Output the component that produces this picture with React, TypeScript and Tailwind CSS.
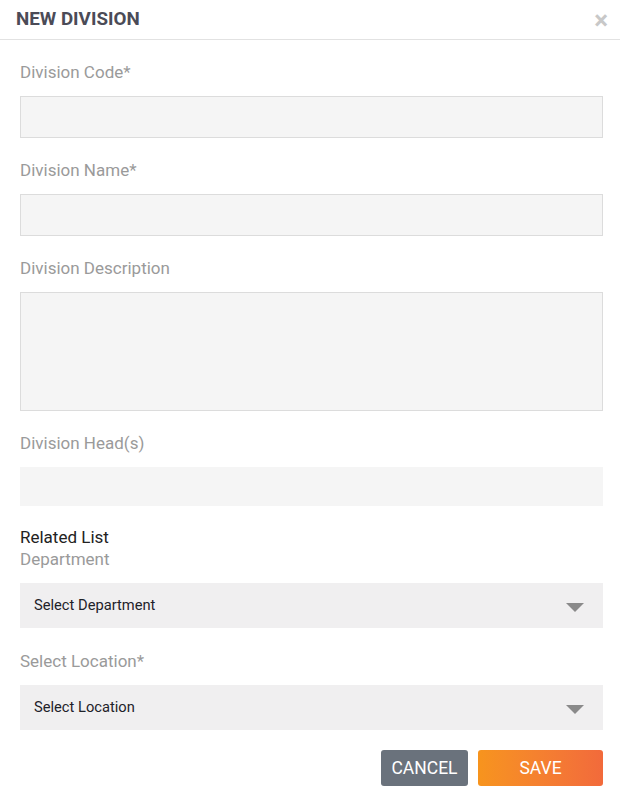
import React from 'react';

function Label({ children, className = '' }: { children: React.ReactNode; className?: string }) {
  return <div className={`text-[17px] leading-6 text-[#9a9a9a] ${className}`}>{children}</div>;
}

function SelectBox({ placeholder }: { placeholder: string }) {
  return (
    <div className="flex h-[45px] items-center justify-between bg-[#f0eff0] pl-[14px] pr-[19px]">
      <span className="text-[14.7px] text-[#1e2229]">{placeholder}</span>
      <svg width="18" height="9" viewBox="0 0 18 9" className="mt-[3px]">
        <path d="M0 0 L18 0 L9 9 Z" fill="#8a8a8a" />
      </svg>
    </div>
  );
}

export default function App() {
  return (
    <div className="h-[802px] w-[620px] bg-white font-['Roboto',sans-serif]">
      {/* Header */}
      <div className="flex h-10 items-center justify-between border-b border-[#e2e2e2] pl-4 pr-[12px]">
        <h1 className="text-[18.8px] font-bold text-[#4b4b57]">NEW DIVISION</h1>
        <span className="text-[26px] font-bold leading-none text-[#c8c8c8]">×</span>
      </div>

      {/* Body */}
      <div className="pl-5 pr-[17px] pt-5">
        <Label>Division Code*</Label>
        <div className="mt-3 h-[42px] border border-[#dcdcdc] bg-[#f5f5f5]" />

        <Label className="mt-5">Division Name*</Label>
        <div className="mt-3 h-[42px] border border-[#dcdcdc] bg-[#f5f5f5]" />

        <Label className="mt-5">Division Description</Label>
        <div className="mt-3 h-[119px] border border-[#dcdcdc] bg-[#f5f5f5]" />

        <Label className="mt-5">Division Head(s)</Label>
        <div className="mt-3 h-[39px] bg-[#f5f5f5]" />

        <div className="mt-5 text-[17px] leading-[22px] text-[#222]">Related List</div>
        <Label className="leading-[22px]">Department</Label>
        <div className="mt-[13px]">
          <SelectBox placeholder="Select Department" />
        </div>

        <Label className="mt-[21px]">Select Location*</Label>
        <div className="mt-3">
          <SelectBox placeholder="Select Location" />
        </div>

        <div className="mt-5 flex justify-end gap-[10px]">
          <button className="h-9 w-[87px] rounded-[3px] bg-[#6a727c] text-[17.5px] text-white">CANCEL</button>
          <button className="h-9 w-[125px] rounded-[3px] bg-gradient-to-r from-[#f7941d] to-[#f26a3b] text-[17.5px] text-white">
            SAVE
          </button>
        </div>
      </div>
    </div>
  );
}
